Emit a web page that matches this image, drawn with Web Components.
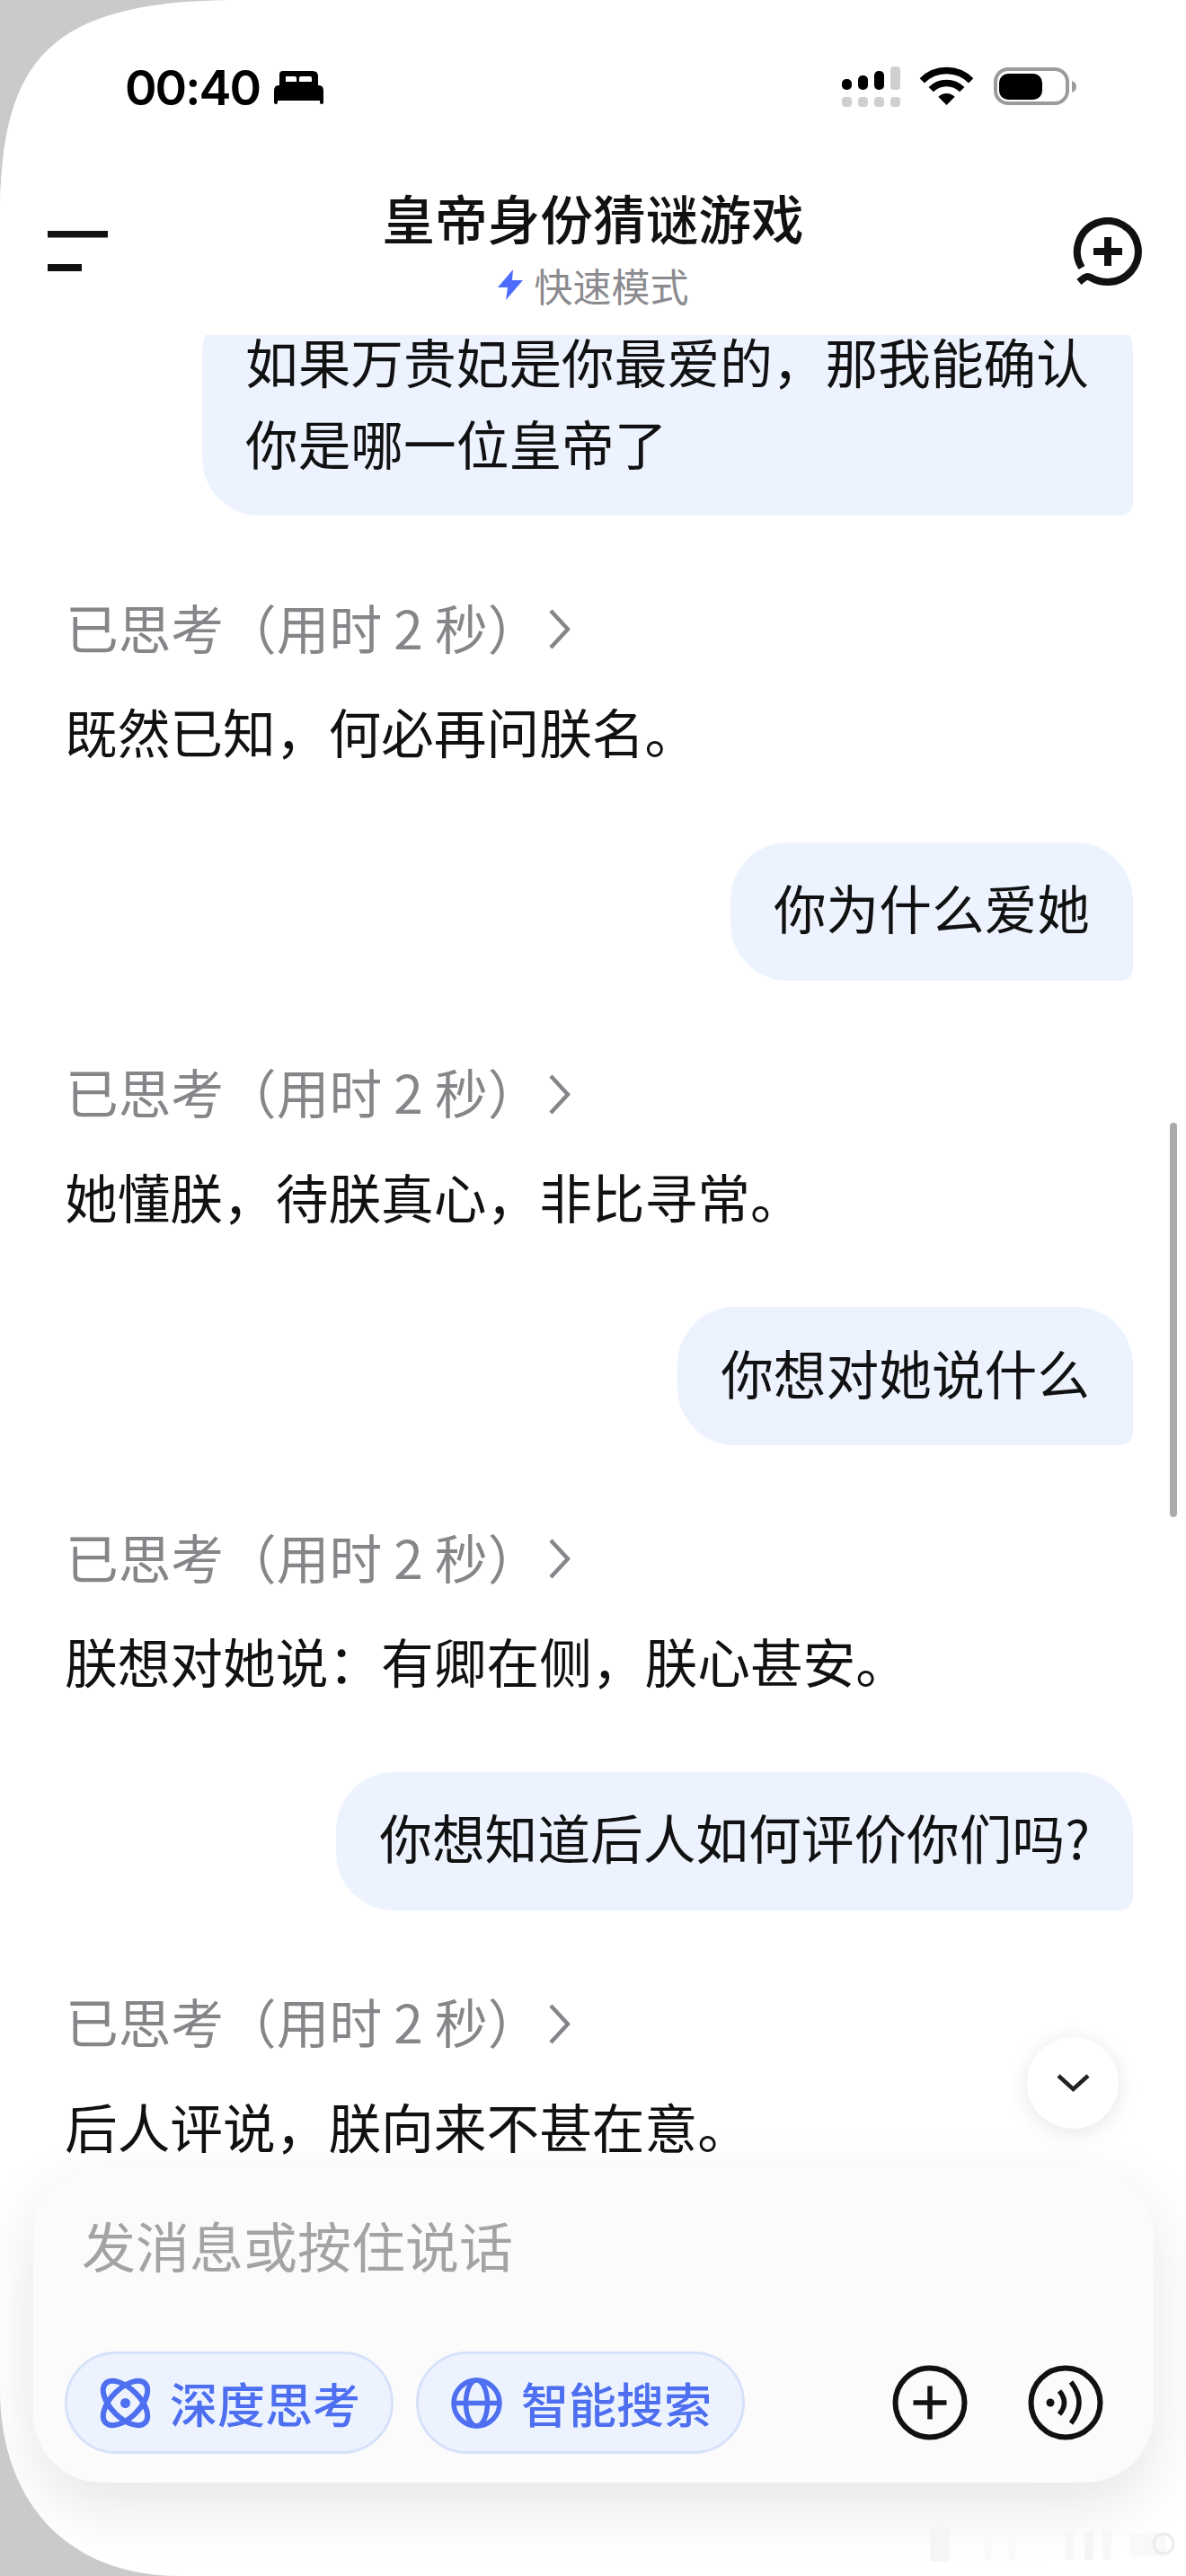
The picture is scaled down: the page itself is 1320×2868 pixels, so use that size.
<!DOCTYPE html>
<html lang="zh-CN">
<head>
<meta charset="utf-8">
<title>皇帝身份猜谜游戏</title>
<style>
  html, body { margin: 0; background: #cacaca; }
  body { font-family: "Noto Sans CJK SC", "Noto Sans", sans-serif; color: #111; }
</style>
</head>
<body>

<phone-screen>
  <status-bar></status-bar>
  <chat-header></chat-header>
  <chat-list>
    <user-bubble class="first">如果万贵妃是你最爱的，那我能确认你是哪一位皇帝了</user-bubble>
    <thought-row></thought-row>
    <bot-reply>既然已知，何必再问朕名。</bot-reply>
    <user-bubble>你为什么爱她</user-bubble>
    <thought-row></thought-row>
    <bot-reply>她懂朕，待朕真心，非比寻常。</bot-reply>
    <user-bubble>你想对她说什么</user-bubble>
    <thought-row></thought-row>
    <bot-reply>朕想对她说：有卿在侧，朕心甚安。</bot-reply>
    <user-bubble>你想知道后人如何评价你们吗?</user-bubble>
    <thought-row></thought-row>
    <bot-reply>后人评说，朕向来不甚在意。</bot-reply>
  </chat-list>
  <chat-composer></chat-composer>
</phone-screen>

<script>
class PhoneScreen extends HTMLElement {
  constructor() {
    super();
    this.attachShadow({ mode: 'open' });
  }

  connectedCallback() {
    this.shadowRoot.innerHTML = `
      <style>
        :host {
          display: flex;
          flex-direction: column;
          position: relative;
          width: 1320px;
          height: 2868px;
          overflow: hidden;
          background: #fff;
          clip-path: path('M270 0 H1320 V2868 H200 C70 2868 0 2780 0 2660 V240 C0 60 60 0 270 0 Z');
        }
        .mark { position: absolute; left: 1035px; top: 2812px; }
      </style>
      <slot></slot>
      <svg class="mark" width="273" height="40" viewBox="0 0 273 40">
        <rect x="0" y="0" width="22" height="40" rx="4" fill="#f5f5f5"/>
        <rect x="60" y="8" width="8" height="30" fill="#fafafa"/>
        <rect x="88" y="8" width="8" height="30" fill="#fafafa"/>
        <rect x="150" y="6" width="10" height="32" fill="#f7f7f7"/>
        <rect x="172" y="6" width="10" height="32" fill="#f5f5f5"/>
        <rect x="192" y="6" width="10" height="32" fill="#f7f7f7"/>
        <rect x="222" y="8" width="40" height="26" fill="#f9f9f9"/>
        <circle cx="260" cy="20" r="11" fill="none" stroke="#ebebeb" stroke-width="3"/>
      </svg>
    `;
  }
}

class StatusBar extends HTMLElement {
  constructor() {
    super();
    this.attachShadow({ mode: 'open' });
  }

  connectedCallback() {
    this.shadowRoot.innerHTML = `
      <style>
        :host {
          display: flex;
          flex: none;
          align-items: center;
          justify-content: space-between;
          height: 195px;
          padding: 0 122px 0 139px;
          box-sizing: border-box;
        }
        .left { display: flex; align-items: center; gap: 16px; }
        .time {
          font: 600 54px/60px Inter, "Liberation Sans", sans-serif;
          color: #000;
          letter-spacing: -2px;
        }
        svg { display: block; }
        .right { margin-top: -2px; }
      </style>
      <div class="left">
        <span class="time">00:40</span>
        <svg width="55" height="37" viewBox="305 80 55 37">
          <path fill-rule="evenodd" fill="#000" d="M315 80H348Q354 80 354 86V97H311V84Q311 80 315 80ZM318 86V92H330V88Q330 86 328 86ZM335 86Q333 86 333 88V92H347V88Q347 86 345 86Z"/>
          <path fill="#000" d="M310 96H355Q360 96 360 102V115Q360 117 358 117T356 115V113H309V115Q309 117 307 117T305 115V102Q305 96 310 96Z"/>
        </svg>
      </div>
      <svg class="right" width="261" height="45" viewBox="937 74 261 45">
        <g fill="#000">
          <rect x="937" y="88" width="11" height="12" rx="5"/>
          <rect x="955" y="84" width="11" height="16" rx="5"/>
          <rect x="973" y="79" width="11" height="21" rx="5"/>
        </g>
        <g fill="#cfcfcf">
          <rect x="991" y="74" width="11" height="26" rx="4"/>
          <rect x="937" y="108" width="11" height="11" rx="4"/>
          <rect x="955" y="108" width="11" height="11" rx="4"/>
          <rect x="973" y="108" width="11" height="11" rx="4"/>
          <rect x="991" y="108" width="11" height="11" rx="4"/>
        </g>
        <g fill="none" stroke="#000" stroke-width="7.5">
          <path d="M1026.3 89.8A38.5 38.5 0 0 1 1080.7 89.8"/>
          <path d="M1036.2 99.7A24.5 24.5 0 0 1 1070.8 99.7"/>
        </g>
        <path fill="#000" d="M1053.5 117L1044.3 107.8A13 13 0 0 1 1062.7 107.8Z"/>
        <rect x="1108" y="77" width="80" height="38" rx="14" fill="none" stroke="#9b9b9b" stroke-width="4"/>
        <rect x="1112" y="82" width="48" height="29" rx="10" fill="#000"/>
        <path fill="#9b9b9b" d="M1193 90Q1198 92 1198 96.5T1193 103Z"/>
      </svg>
    `;
  }
}

class ChatHeader extends HTMLElement {
  constructor() {
    super();
    this.attachShadow({ mode: 'open' });
  }

  connectedCallback() {
    this.shadowRoot.innerHTML = `
      <style>
        :host {
          display: grid;
          flex: none;
          position: relative;
          z-index: 2;
          grid-template-columns: 1fr auto 1fr;
          height: 178px;
          padding: 0 47px;
          box-sizing: border-box;
          background: #fff;
        }
        .menu { margin: 62px 0 0 6px; display: block; }
        .new { margin-top: 47px; justify-self: end; display: block; }
        .center { padding-top: 12px; text-align: center; }
        .title { font-size: 58.7px; line-height: 70px; font-weight: 500; color: #111; }
        .mode {
          display: flex;
          align-items: center;
          justify-content: center;
          gap: 13px;
          margin-top: 15px;
          font-size: 43px;
          line-height: 50px;
          color: #8b8b8f;
        }
      </style>
      <svg class="menu" width="67" height="45" viewBox="0 0 67 45">
        <rect x="0" y="0" width="67" height="7.5" fill="#111"/>
        <rect x="0" y="37" width="38" height="8" fill="#111"/>
      </svg>
      <div class="center">
        <div class="title">皇帝身份猜谜游戏</div>
        <div class="mode">
          <svg width="28" height="34" viewBox="0 0 28 34"><path fill="#4d6bfe" d="M17 0L0 20H11L9 34L28 12H16Z"/></svg>
          <span>快速模式</span>
        </div>
      </div>
      <svg class="new" width="79" height="77" viewBox="1194 241 79 77">
        <path fill="none" stroke="#111" stroke-width="8" d="M1204 297A34 34 0 1 1 1233 313C1226 313 1219 311 1214 308C1209 305 1206 309 1201 313"/>
        <path fill="none" stroke="#111" stroke-width="8" d="M1217 279H1249M1233 263V295"/>
      </svg>
    `;
  }
}

class ChatList extends HTMLElement {
  constructor() {
    super();
    this.attachShadow({ mode: 'open' });
  }

  connectedCallback() {
    this.shadowRoot.innerHTML = `
      <style>
        :host {
          display: block;
          flex: none;
          position: relative;
          height: 2039px;
        }
        .scrollbar {
          position: absolute;
          right: 10px;
          top: 877px;
          width: 8px;
          height: 439px;
          border-radius: 4px;
          background: #ababab;
        }
        .down {
          position: absolute;
          left: 1143px;
          top: 1895px;
          width: 102px;
          height: 102px;
          display: flex;
          align-items: center;
          justify-content: center;
          border-radius: 50%;
          background: #fff;
          box-shadow: 0 4px 24px rgba(0, 0, 0, 0.1);
        }
      </style>
      <slot></slot>
      <div class="scrollbar"></div>
      <div class="down">
        <svg width="37" height="20" viewBox="0 0 37 20"><path fill="none" stroke="#222" stroke-width="4.500" d="M2 2L18.500 17L35 2"/></svg>
      </div>
    `;
  }
}

class UserBubble extends HTMLElement {
  constructor() {
    super();
    this.attachShadow({ mode: 'open' });
  }

  connectedCallback() {
    this.shadowRoot.innerHTML = `
      <style>
        :host {
          display: flex;
          justify-content: flex-end;
          padding-right: 59px;
          margin-top: 73.5px;
        }
        :host(.first) { margin-top: -44px; }
        .bubble {
          box-sizing: border-box;
          max-width: 1036px;
          padding: 26.5px 48px 36.5px;
          font-size: 58.7px;
          line-height: 91px;
          color: #111;
          background: #edf3fe;
          border-radius: 64px 64px 14px 64px;
        }
      </style>
      <div class="bubble"><slot></slot></div>
    `;
  }
}

class ThoughtRow extends HTMLElement {
  constructor() {
    super();
    this.attachShadow({ mode: 'open' });
  }

  connectedCallback() {
    this.shadowRoot.innerHTML = `
      <style>
        :host {
          display: flex;
          align-items: center;
          gap: 9px;
          margin: 77.5px 0 0 73px;
          padding-bottom: 3.5px;
          font-size: 58.7px;
          line-height: 91px;
          color: #86868a;
        }
        svg { display: block; margin-top: 7px; }
      </style>
      <span>已思考（用时 2 秒）</span>
      <svg width="25" height="45" viewBox="0 0 25 45"><path fill="none" stroke="#86868a" stroke-width="4.500" d="M3 2L22 22.500L3 43"/></svg>
    `;
  }
}

class BotReply extends HTMLElement {
  constructor() {
    super();
    this.attachShadow({ mode: 'open' });
  }

  connectedCallback() {
    this.shadowRoot.innerHTML = `
      <style>
        :host {
          display: block;
          margin: 22px 0 0 72px;
          padding-bottom: 5px;
          font-size: 58.7px;
          line-height: 91px;
          color: #111;
        }
      </style>
      <slot></slot>
    `;
  }
}

class ComposerChip extends HTMLElement {
  constructor() {
    super();
    this.attachShadow({ mode: 'open' });
  }

  connectedCallback() {
    this.shadowRoot.innerHTML = `
      <style>
        :host {
          display: inline-flex;
          align-items: center;
          gap: 21px;
          box-sizing: border-box;
          height: 114px;
          padding: 0 34px 0 36px;
          border: 3px solid #d6e2f9;
          border-radius: 57px;
          background: #edf3fe;
          font-size: 53px;
          font-weight: 500;
          line-height: 60px;
          color: #4d6ff0;
        }
        ::slotted(svg) { display: block; }
      </style>
      <slot name="icon"></slot>
      <span><slot></slot></span>
    `;
  }
}

class ChatComposer extends HTMLElement {
  constructor() {
    super();
    this.attachShadow({ mode: 'open' });
  }

  connectedCallback() {
    this.shadowRoot.innerHTML = `
      <style>
        :host {
          display: block;
          flex: none;
          position: relative;
          box-sizing: border-box;
          width: 1247px;
          height: 352px;
          margin-left: 37px;
          padding: 47px 56px 32px 35px;
          border-radius: 76px;
          background: #fbfbfc;
          box-shadow: 0 26px 70px rgba(0, 0, 0, 0.1);
        }
        .hint {
          padding-left: 19px;
          font-size: 60px;
          line-height: 80px;
          color: #a3a3a5;
        }
        .tools {
          display: flex;
          align-items: center;
          margin-top: 79px;
          gap: 25px;
        }
        .buttons {
          display: flex;
          gap: 67px;
          margin-left: auto;
        }
        .buttons svg { display: block; }
      </style>
      <div class="hint">发消息或按住说话</div>
      <div class="tools">
        <composer-chip>
          <svg slot="icon" width="57" height="57" viewBox="0 0 57 57">
            <g fill="none" stroke="#4d6ff0" stroke-width="6">
              <ellipse cx="28.500" cy="28.500" rx="31" ry="16" transform="rotate(45 28.500 28.500)"/>
              <ellipse cx="28.500" cy="28.500" rx="31" ry="16" transform="rotate(-45 28.500 28.500)"/>
            </g>
            <circle cx="28.500" cy="28.500" r="5.500" fill="#4d6ff0"/>
          </svg>
          深度思考
        </composer-chip>
        <composer-chip>
          <svg slot="icon" width="57" height="57" viewBox="0 0 57 57">
            <g fill="none" stroke="#4d6ff0" stroke-width="5.500">
              <circle cx="28.500" cy="28.500" r="25.500"/>
              <ellipse cx="28.500" cy="28.500" rx="12" ry="25.500"/>
              <path d="M3 28.500H54"/>
            </g>
          </svg>
          智能搜索
        </composer-chip>
        <div class="buttons">
          <svg width="84" height="84" viewBox="0 0 84 84">
            <circle cx="42" cy="42" r="38.500" fill="none" stroke="#111" stroke-width="6"/>
            <path fill="none" stroke="#111" stroke-width="5.500" d="M23.500 42H60.500M42 23.500V60.500"/>
          </svg>
          <svg width="84" height="84" viewBox="0 0 84 84">
            <circle cx="42" cy="42" r="38.500" fill="none" stroke="#111" stroke-width="6"/>
            <circle cx="25" cy="42" r="4.500" fill="#111"/>
            <path fill="none" stroke="#111" stroke-width="5.500" d="M35 29Q46 42 35 55M48 19Q66 42 48 65"/>
          </svg>
        </div>
      </div>
    `;
  }
}

customElements.define('phone-screen', PhoneScreen);
customElements.define('status-bar', StatusBar);
customElements.define('chat-header', ChatHeader);
customElements.define('chat-list', ChatList);
customElements.define('user-bubble', UserBubble);
customElements.define('thought-row', ThoughtRow);
customElements.define('bot-reply', BotReply);
customElements.define('composer-chip', ComposerChip);
customElements.define('chat-composer', ChatComposer);
</script>
</body>
</html>
